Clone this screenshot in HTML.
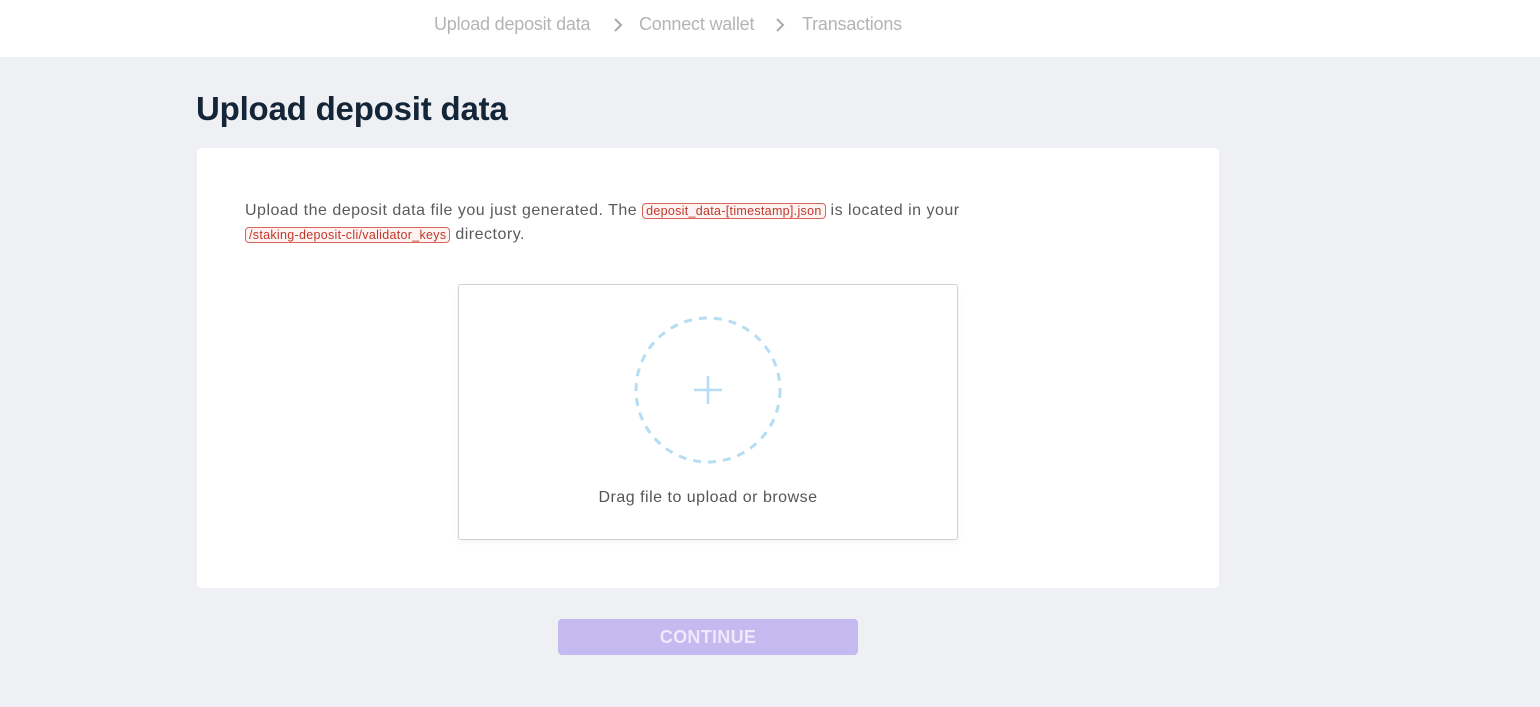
<!DOCTYPE html>
<html><head><meta charset="utf-8"><style>
*{margin:0;padding:0;box-sizing:border-box}
body{width:1540px;height:707px;background:#eff0f4;font-family:"Liberation Sans",sans-serif;position:relative;overflow:hidden}
.top{position:absolute;left:0;top:0;width:1540px;height:57px;background:#fff}
.crumb{position:absolute;top:14px;font-size:18px;color:#b4b4b4;white-space:nowrap;letter-spacing:-0.2px}
h1{position:absolute;left:196px;top:90px;font-size:33px;font-weight:bold;color:#142538;letter-spacing:-0.2px}
.card{position:absolute;left:197px;top:148px;width:1022px;height:440px;background:#fff;border-radius:4px}
.txt{position:absolute;left:245px;top:199px;font-size:16px;line-height:24px;color:#5a5a5a;width:760px;letter-spacing:0.5px;white-space:nowrap}
code{font-family:"Liberation Sans",sans-serif;font-size:12.5px;letter-spacing:0.3px;color:#c0392b;border:1px solid #d9655a;border-radius:4px;padding:0 3px;background:#fdf3f2;white-space:nowrap}
.drop{position:absolute;left:458px;top:284px;width:500px;height:256px;border:1px solid #d0d0d0;border-radius:3px;background:#fff;box-shadow:0 2px 6px rgba(0,0,0,0.05)}
.dt{position:absolute;top:489px;text-align:center;font-size:16px;color:#555;letter-spacing:0.5px}
.btn{position:absolute;left:558px;top:619px;width:300px;height:36px;background:#c5baf0;border-radius:4px;color:#eeeafc;font-weight:bold;font-size:18px;text-align:center;line-height:36px;letter-spacing:0.3px}
</style></head><body>
<div class="top"></div>
<div class="crumb" style="left:434px">Upload deposit data</div>
<svg style="position:absolute;left:612px;top:17px" width="12" height="16"><path d="M3 2L9 8L3 14" fill="none" stroke="#aaa" stroke-width="2"/></svg>
<div class="crumb" style="left:639px">Connect wallet</div>
<svg style="position:absolute;left:774px;top:17px" width="12" height="16"><path d="M3 2L9 8L3 14" fill="none" stroke="#aaa" stroke-width="2"/></svg>
<div class="crumb" style="left:802px">Transactions</div>
<h1>Upload deposit data</h1>
<div class="card"></div>
<div class="txt">Upload the deposit data file you just generated. The <code>deposit_data-[timestamp].json</code> is located in your<br><code>/staking-deposit-cli/validator_keys</code> directory.</div>
<div class="drop"></div>
<svg style="position:absolute;left:632px;top:316px" width="152" height="148">
<circle cx="76" cy="74" r="72" fill="none" stroke="#b5ddf3" stroke-width="3" stroke-dasharray="8 7"/>
<path d="M62 74H90M76 60V88" stroke="#b5ddf3" stroke-width="2.5"/>
</svg>
<div class="dt" style="left:458px;width:500px">Drag file to upload or browse</div>
<div class="btn">CONTINUE</div>
</body></html>
